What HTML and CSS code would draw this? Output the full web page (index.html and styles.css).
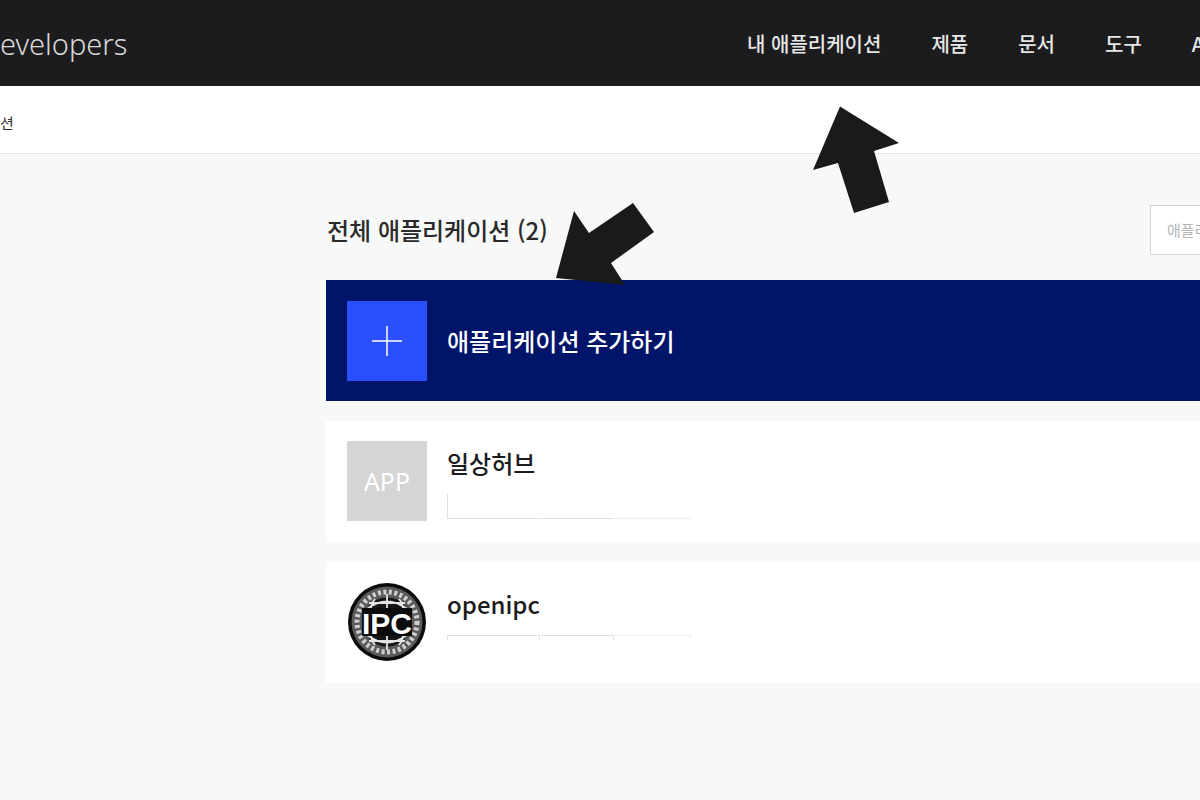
FILE: index.html
```html
<!DOCTYPE html>
<html lang="ko">
<head>
<meta charset="utf-8">
<title>내 애플리케이션</title>
<link rel="stylesheet" href="styles.css">
</head>
<body>
<header class="topbar">
  <div class="logo">evelopers</div>
  <nav class="gnb">
    <a>내 애플리케이션</a>
    <a>제품</a>
    <a>문서</a>
    <a>도구</a>
    <a>A</a>
  </nav>
</header>
<div class="crumb">션</div>
<main class="content">
  <div class="head-row">
    <h1 class="page-title">전체 애플리케이션 (2)</h1>
    <div class="search">애플리케이션</div>
  </div>
  <section class="card card-add">
    <div class="thumb thumb-add">
      <svg width="32" height="32" viewBox="0 0 32 32"><path d="M16 1v30M1 16h30" stroke="#fff" stroke-width="1.5" fill="none"/></svg>
    </div>
    <div class="add-label">애플리케이션 추가하기</div>
  </section>
  <section class="card">
    <div class="thumb thumb-app">APP</div>
    <div class="info">
      <div class="app-name">일상허브</div>
      <div class="chips chips-bottom"><span class="chip c1"></span><span class="chip c2"></span><span class="chip c3"></span></div>
    </div>
  </section>
  <section class="card">
    <div class="thumb">
      <svg class="ipc" width="80" height="80" viewBox="0 0 80 80">
        <circle cx="40" cy="40" r="39" fill="#0c0c0c"/>
        <circle cx="40" cy="40" r="35.5" fill="#5a5a5a"/>
        <circle cx="40" cy="40" r="30" fill="none" stroke="#cfcfcf" stroke-width="5" stroke-dasharray="3 2.5"/>
        <circle cx="40" cy="40" r="24.5" fill="#161616"/>
        <path d="M20 27Q40 12 60 27M20 53Q40 68 60 53M40 12V26M40 54V68M28 17Q24 22 24 27M52 17Q56 22 56 27M28 63Q24 58 24 53M52 63Q56 58 56 53M22 21H58M22 59H58" fill="none" stroke="#e4e4e4" stroke-width="1.8"/>
        <rect x="15" y="26" width="50" height="28" fill="#0c0c0c"/>
        <text x="40" y="52" class="ipc-text" text-anchor="middle">IPC</text>
      </svg>
    </div>
    <div class="info">
      <div class="app-name">openipc</div>
      <div class="chips chips-top"><span class="chip c1"></span><span class="chip c2"></span><span class="chip c3"></span></div>
    </div>
  </section>
</main>
<svg class="arrows" width="1200" height="800" viewBox="0 0 1200 800">
  <path d="M840 106.500L899 143L874 151L889 202L854 213L838 163L813 170Z" fill="#1a1a1a"/>
  <path d="M556 278L574 211L589 233L633 203L654 232L611 263L625 285Z" fill="#1a1a1a"/>
</svg>
</body>
</html>
```
FILE: styles.css
```css
* { box-sizing: border-box; }
html, body { margin: 0; height: 100%; }
body {
  position: relative;
  width: 1200px;
  height: 800px;
  overflow: hidden;
  background: #f7f8f8;
  color: #1c1c1e;
  font-family: "Noto Sans CJK KR", "Noto Sans", sans-serif;
}
.topbar {
  height: 86px;
  background: #1c1c1e;
  display: flex;
  align-items: center;
  justify-content: space-between;
}
.logo {
  font-family: "Noto Sans", sans-serif;
  font-weight: 300;
  font-size: 29px;
  color: #d9d9d9;
  line-height: 1;
}
.gnb {
  display: flex;
  gap: 50px;
  width: 453px;
  flex: none;
  overflow: hidden;
  font-size: 20px;
  font-weight: 500;
  color: #e6e6e6;
  white-space: nowrap;
}
.crumb {
  height: 68px;
  background: #fff;
  border-bottom: 1px solid #e3e5e6;
  font-size: 15px;
  line-height: 74px;
  color: #333;
}
.content {
  padding: 50px 0 0 326px;
  width: 1200px;
}
.head-row {
  height: 52px;
  margin-bottom: 24px;
  display: flex;
  align-items: center;
  justify-content: space-between;
}
.page-title {
  margin: 0 0 0 1px;
  font-size: 24px;
  font-weight: 500;
  line-height: 52px;
  color: #2a2a2a;
}
.search {
  width: 50px;
  height: 50px;
  padding-left: 16px;
  background: #fff;
  border: 1px solid #cfd1d3;
  border-right: 0;
  overflow: hidden;
  white-space: nowrap;
  font-size: 15px;
  line-height: 48px;
  color: #b4b4b4;
}
.card {
  display: flex;
  align-items: flex-start;
  gap: 20px;
  height: 121px;
  padding: 20px 21px;
  margin-bottom: 20px;
  background: #fff;
}
.card-add {
  align-items: center;
  background: #00156a;
}
.thumb {
  flex: none;
  width: 80px;
  height: 80px;
  display: flex;
  align-items: center;
  justify-content: center;
}
.thumb-add { background: #2b50fb; }
.thumb-app {
  background: #d5d5d5;
  color: #fff;
  font-family: "Noto Sans", sans-serif;
  font-size: 25px;
}
.add-label {
  color: #fff;
  font-size: 24px;
  font-weight: 500;
}
.info { display: flex; flex-direction: column; }
.app-name {
  font-size: 24px;
  font-weight: 500;
  line-height: 44px;
  color: #1c1c1e;
}
.chips {
  display: flex;
  gap: 1px;
  height: 25px;
  margin-top: 9px;
}
.chip { display: block; height: 100%; border: 0 solid #dfe0e1; }
.c1 { width: 93px; }
.c2 { width: 73px; }
.c3 { width: 76px; }
.chips-bottom .chip { border-bottom-width: 1px; }
.chips-bottom .c1 { border-left-width: 1px; }
.chips-bottom .c3 { border-color: #eeeeee; }
.chips-top .chip { border-top-width: 1px; border-right-width: 1px; height: 5px; }
.chips-top .c1 { border-left-width: 1px; }
.chips-top .c3 { border-color: #eeeeee; }
.ipc-text {
  font-family: "Liberation Sans", sans-serif;
  font-weight: 700;
  font-size: 30px;
  fill: #fff;
}
.arrows {
  position: absolute;
  left: 0;
  top: 0;
  pointer-events: none;
}
```
